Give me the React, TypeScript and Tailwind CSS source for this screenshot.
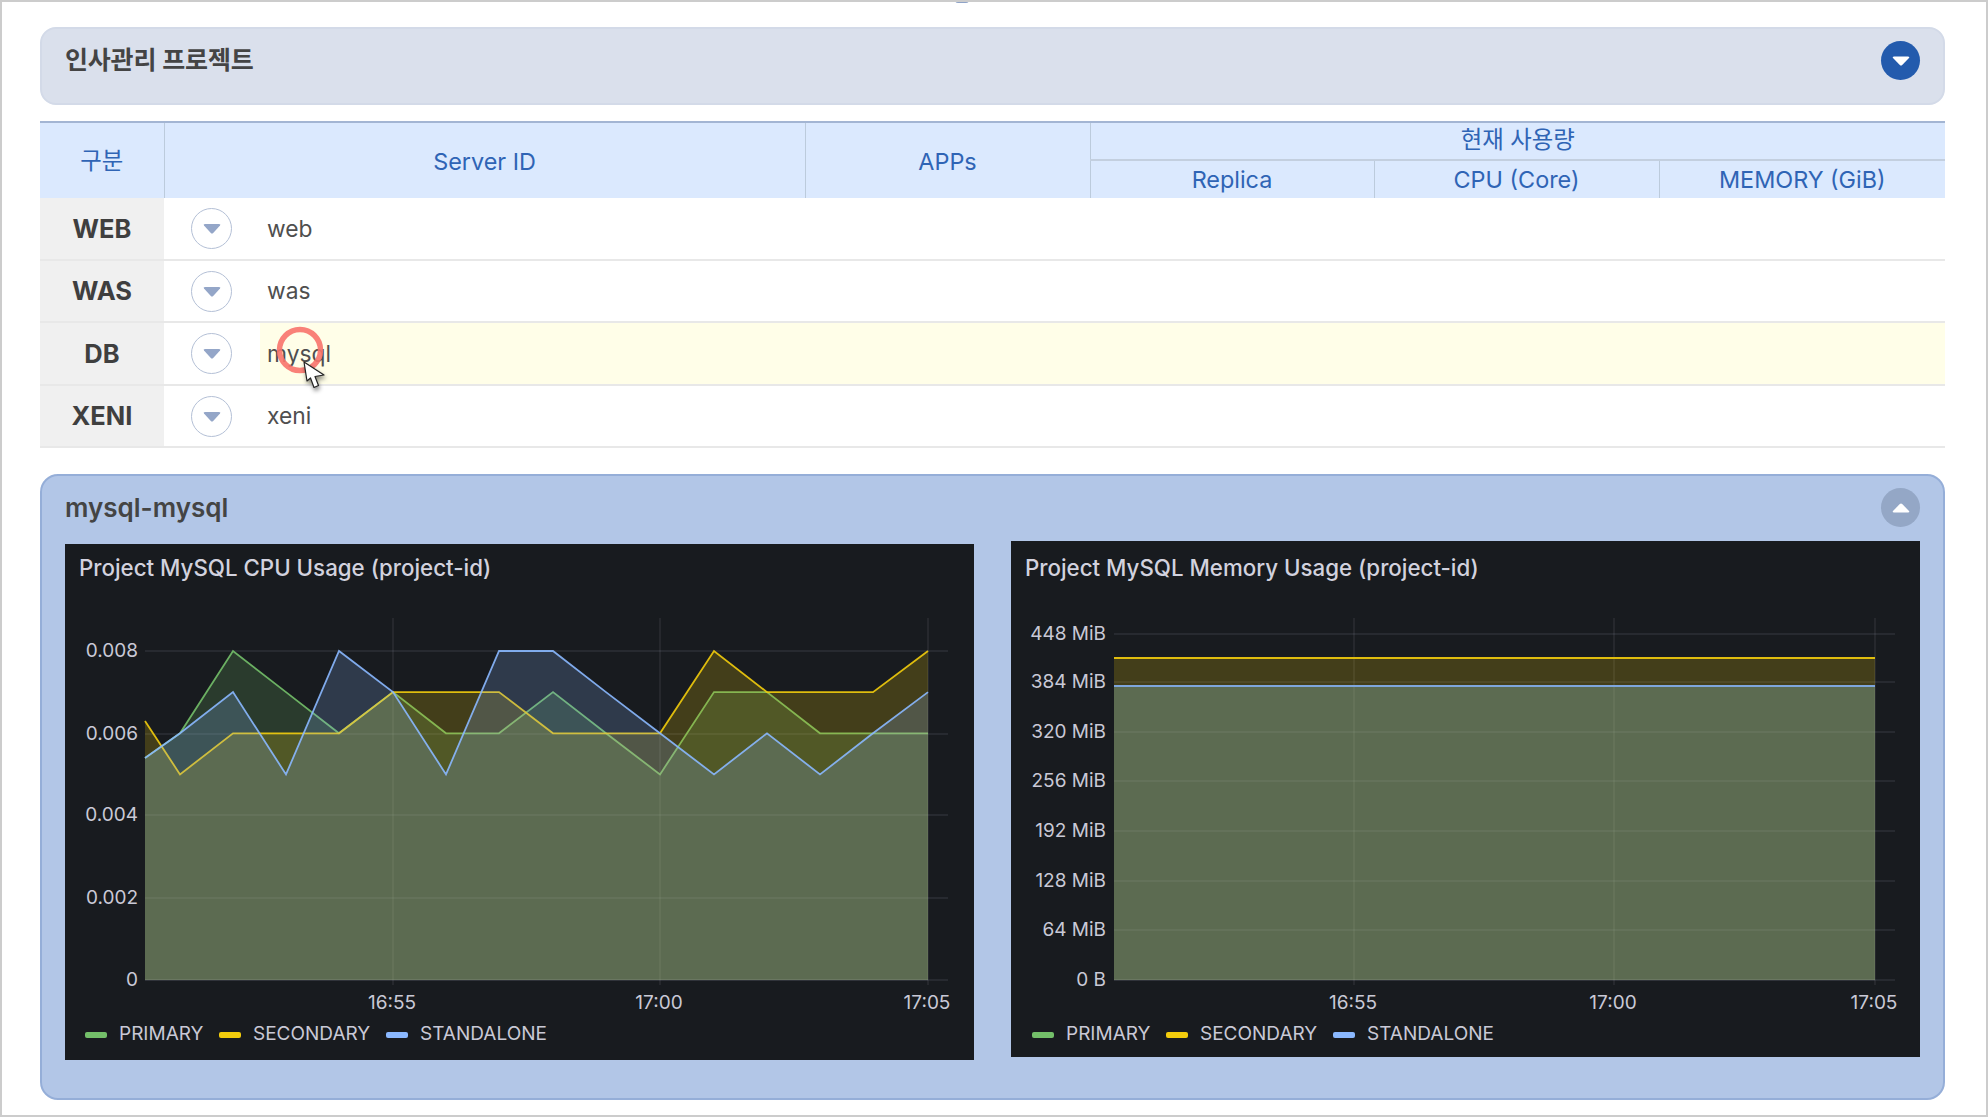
const GREEN = "#73bf69"
const YELLOW = "#f2cc0c"
const BLUE = "#8ab8ff"

const cpuX = [145, 180, 233, 286, 339, 393, 446, 499, 553, 606, 660, 714, 767, 820, 873, 928]
const cpuSeries = [
  { color: GREEN, values: [0.0054, 0.006, 0.008, 0.007, 0.006, 0.007, 0.006, 0.006, 0.007, 0.006, 0.005, 0.007, 0.007, 0.006, 0.006, 0.006] },
  { color: YELLOW, values: [0.0063, 0.005, 0.006, 0.006, 0.006, 0.007, 0.007, 0.007, 0.006, 0.006, 0.006, 0.008, 0.007, 0.007, 0.007, 0.008] },
  { color: BLUE, values: [0.0054, 0.006, 0.007, 0.005, 0.008, 0.007, 0.005, 0.008, 0.008, 0.007, 0.006, 0.005, 0.006, 0.005, 0.006, 0.007] },
]
const cpuY = (v: number) => 980 - (v / 0.008) * 329

const servers = [
  { type: "WEB", id: "web", rowHeight: "h-[61px]" },
  { type: "WAS", id: "was", rowHeight: "h-[60px]" },
  { type: "DB", id: "mysql", rowHeight: "h-[61px]" },
  { type: "XENI", id: "xeni", rowHeight: "h-[60px]" },
]

type Tick = { label: string; y: number }

function Chart({
  title,
  titleClass,
  left,
  top,
  plotLeft,
  plotRight,
  gridRight,
  labelRight,
  ticks,
  times,
  legendX,
  children,
}: {
  title: string
  titleClass: string
  left: number
  top: number
  plotLeft: number
  plotRight: number
  gridRight: number
  labelRight: number
  ticks: Tick[]
  times: { label: string; x: number }[]
  legendX: number[]
  children: React.ReactNode
}) {
  const legend = [
    { name: "PRIMARY", color: GREEN },
    { name: "SECONDARY", color: YELLOW },
    { name: "STANDALONE", color: BLUE },
  ]
  return (
    <div className="relative w-[909px] h-[516px] bg-[#181b1f] shrink-0">
      <div className={`absolute left-[14px] text-[22.3px] leading-[30px] font-medium text-[#d2d2de] ${titleClass}`}>{title}</div>
      <svg
        className="absolute inset-0"
        width={909}
        height={516}
        viewBox={`${left} ${top} 909 516`}
        style={{ fontFamily: "Inter, sans-serif" }}
      >
        {ticks.map((t) => (
          <g key={t.label}>
            <line x1={plotLeft} x2={gridRight} y1={t.y} y2={t.y} stroke="#ccccdc" strokeOpacity={0.12} strokeWidth={1.3} />
            <text x={labelRight} y={t.y + 6} textAnchor="end" fontSize={19} fill="#c9c9d6">
              {t.label}
            </text>
          </g>
        ))}
        {times.map((t) => (
          <g key={t.label}>
            <line x1={t.x} x2={t.x} y1={618} y2={985} stroke="#ccccdc" strokeOpacity={0.12} strokeWidth={1.3} />
            <text x={t.x - 1} y={1009} textAnchor="middle" fontSize={19} fill="#c9c9d6">
              {t.label}
            </text>
          </g>
        ))}
        {children}
        <line x1={plotLeft} x2={plotRight} y1={980} y2={980} stroke="#ccccdc" strokeOpacity={0.12} strokeWidth={1} />
      </svg>
      {legend.map((item, i) => (
        <div
          key={item.name}
          className="absolute flex items-center gap-[12px] text-[19px] leading-[24px] text-[#c9c9d6]"
          style={{ left: legendX[i] - left, top: 1022 - top }}
        >
          <span className="w-[22px] h-[6px] rounded-[2px] mt-[2px]" style={{ backgroundColor: item.color }} />
          <span>{item.name}</span>
        </div>
      ))}
    </div>
  )
}

function RoundButton({ up, dim }: { up?: boolean; dim?: boolean }) {
  return (
    <button className={`w-[39px] h-[39px] rounded-full flex items-center justify-center ${dim ? "bg-[#94a7c6]" : "bg-[#235bad]"}`}>
      <svg width="18" height="10" viewBox="0 0 18 10" className={up ? "rotate-180" : ""}>
        <path d="M2 0.5 H16 Q18 0.5 17 2 L10.2 9 Q9 10 7.8 9 L1 2 Q0 0.5 2 0.5 Z" fill="#fff" />
      </svg>
    </button>
  )
}

function OutlineButton() {
  return (
    <button className="w-[41px] h-[41px] rounded-full bg-white border-[1.5px] border-[#b4c0d6] flex items-center justify-center">
      <svg width="18" height="11" viewBox="0 0 18 11">
        <path d="M2 1 H16 Q18 1 17 2.5 L10.2 10 Q9 11 7.8 10 L1 2.5 Q0 1 2 1 Z" fill="#94a6c8" />
      </svg>
    </button>
  )
}

export default function App() {
  return (
    <div
      className="relative w-[1988px] h-[1117px] bg-white border-2 border-[#cccccc] overflow-hidden"
      style={{ fontFamily: "Inter, 'Noto Sans CJK KR', sans-serif" }}
    >
      <div className="absolute left-[953px] top-[-2px] w-[14px] h-[3px] rounded-b-full bg-[#8fa3c8]" />

      {/* project header */}
      <div className="absolute left-[38px] top-[25px] w-[1905px] h-[78px] rounded-[16px] bg-[#dae0ec] border-2 border-[#d3dae8] flex items-start justify-between pl-[23px] pr-[23px]">
        <h2 className="text-[25px] leading-[34px] font-semibold text-[#444444] mt-[14px] tracking-[-0.2px]">인사관리 프로젝트</h2>
        <div className="mt-[12px]">
          <RoundButton />
        </div>
      </div>

      {/* server table */}
      <table className="absolute left-[38px] top-[119px] w-[1905px] table-fixed border-collapse text-[23.4px] leading-[26px]">
        <colgroup>
          <col className="w-[124px]" />
          <col className="w-[641px]" />
          <col className="w-[285px]" />
          <col className="w-[284px]" />
          <col className="w-[285px]" />
          <col className="w-[286px]" />
        </colgroup>
        <thead className="text-[#2f64b5] font-normal bg-[#dbe9fe]">
          <tr className="h-[38px] border-t-2 border-[#a3b5d3]">
            <th rowSpan={2} className="font-normal border-r border-[#bccbdc]">구분</th>
            <th rowSpan={2} className="font-normal pt-[2px] border-r border-[#bccbdc]">Server ID</th>
            <th rowSpan={2} className="font-normal pt-[2px] border-r border-[#bccbdc]">APPs</th>
            <th colSpan={3} className="font-normal pb-[3px] border-b-2 border-[#c3cfdf]">현재 사용량</th>
          </tr>
          <tr className="h-[38px]">
            <th className="font-normal border-r border-[#bccbdc]">Replica</th>
            <th className="font-normal border-r border-[#bccbdc]">CPU (Core)</th>
            <th className="font-normal">MEMORY (GiB)</th>
          </tr>
        </thead>
        <tbody>
          {servers.map((s) => (
            <tr key={s.id} className="border-b-2 border-[#e8e8e8]">
              <td className="bg-[#f0f0f0] text-center text-[25.5px] font-bold text-[#3f3f3f] p-0">{s.type}</td>
              <td colSpan={5} className="p-0">
                <div className={`flex items-stretch ${s.rowHeight}`}>
                  <div className="w-[96px] flex items-center pl-[27px] shrink-0">
                    <OutlineButton />
                  </div>
                  <div className={`flex-1 flex items-center pl-[7px] text-[#4f4f4f] text-[22.8px] ${s.id === "mysql" ? "bg-[#fffee8]" : ""}`}>
                    {s.id}
                  </div>
                </div>
              </td>
            </tr>
          ))}
        </tbody>
      </table>

      {/* selected server panel */}
      <div className="absolute left-[38px] top-[472px] w-[1905px] h-[626px] rounded-[18px] bg-[#b2c6e7] border-2 border-[#95aed8]">
        <div className="flex items-start justify-between pl-[23px] pr-[23px]">
          <h3 className="text-[26px] leading-[34px] font-semibold text-[#444444] mt-[15px]">mysql-mysql</h3>
          <div className="mt-[12px]">
            <RoundButton up dim />
          </div>
        </div>
        <div className="flex items-start gap-[37px] pl-[23px] mt-[14px]">
          <div className="mt-[3px]">
            <Chart
              title="Project MySQL CPU Usage (project-id)"
              titleClass="top-[9px]"
              left={65}
              top={544}
              plotLeft={145}
              plotRight={928}
              gridRight={948}
              labelRight={138}
              ticks={[
                { label: "0.008", y: 651 },
                { label: "0.006", y: 734 },
                { label: "0.004", y: 815 },
                { label: "0.002", y: 898 },
                { label: "0", y: 980 },
              ]}
              times={[
                { label: "16:55", x: 393 },
                { label: "17:00", x: 660 },
                { label: "17:05", x: 928 },
              ]}
              legendX={[85, 219, 386]}
            >
              {cpuSeries.map((s) => {
                const pts = s.values.map((v, i) => `${cpuX[i]},${cpuY(v).toFixed(1)}`).join(" ")
                return (
                  <g key={s.color}>
                    <polygon points={`145,980 ${pts} 928,980`} fill={s.color} fillOpacity={0.2} />
                    <polyline points={pts} fill="none" stroke={s.color} strokeWidth={1.8} strokeOpacity={0.9} />
                  </g>
                )
              })}
            </Chart>
          </div>
          <Chart
            title="Project MySQL Memory Usage (project-id)"
            titleClass="top-[12px]"
            left={1011}
            top={541}
            plotLeft={1114}
            plotRight={1875}
            gridRight={1895}
            labelRight={1106}
            ticks={[
              { label: "448 MiB", y: 634 },
              { label: "384 MiB", y: 682 },
              { label: "320 MiB", y: 732 },
              { label: "256 MiB", y: 781 },
              { label: "192 MiB", y: 831 },
              { label: "128 MiB", y: 881 },
              { label: "64 MiB", y: 930 },
              { label: "0 B", y: 980 },
            ]}
            times={[
              { label: "16:55", x: 1354 },
              { label: "17:00", x: 1614 },
              { label: "17:05", x: 1875 },
            ]}
            legendX={[1032, 1166, 1333]}
          >
            <rect x={1114} y={686} width={761} height={294} fill={GREEN} fillOpacity={0.2} />
            <rect x={1114} y={658} width={761} height={322} fill={YELLOW} fillOpacity={0.2} />
            <rect x={1114} y={686} width={761} height={294} fill={BLUE} fillOpacity={0.2} />
            <line x1={1114} x2={1875} y1={658} y2={658} stroke="#e0bd0e" strokeWidth={2} />
            <line x1={1114} x2={1875} y1={686} y2={686} stroke="#7ea6dd" strokeWidth={2} />
          </Chart>
        </div>
      </div>

      {/* click marker and pointer */}
      <svg className="absolute left-[268px] top-[318px]" width="70" height="80" viewBox="0 0 70 80">
        <defs>
          <filter id="cursor-shadow" x="-50%" y="-50%" width="200%" height="200%">
            <feDropShadow dx="1" dy="3" stdDeviation="2" floodColor="#000" floodOpacity="0.45" />
          </filter>
        </defs>
        <circle cx="30" cy="30" r="20.5" fill="none" stroke="#f8736b" strokeWidth="5.5" strokeOpacity="0.9" />
        <path
          d="M34 42 L37 61 L40.5 58 L44 67.5 L48.5 65.5 L45 56.5 L54 55 Z"
          fill="#fff"
          stroke="#222"
          strokeWidth="1.2"
          strokeLinejoin="round"
          filter="url(#cursor-shadow)"
        />
      </svg>
    </div>
  )
}
